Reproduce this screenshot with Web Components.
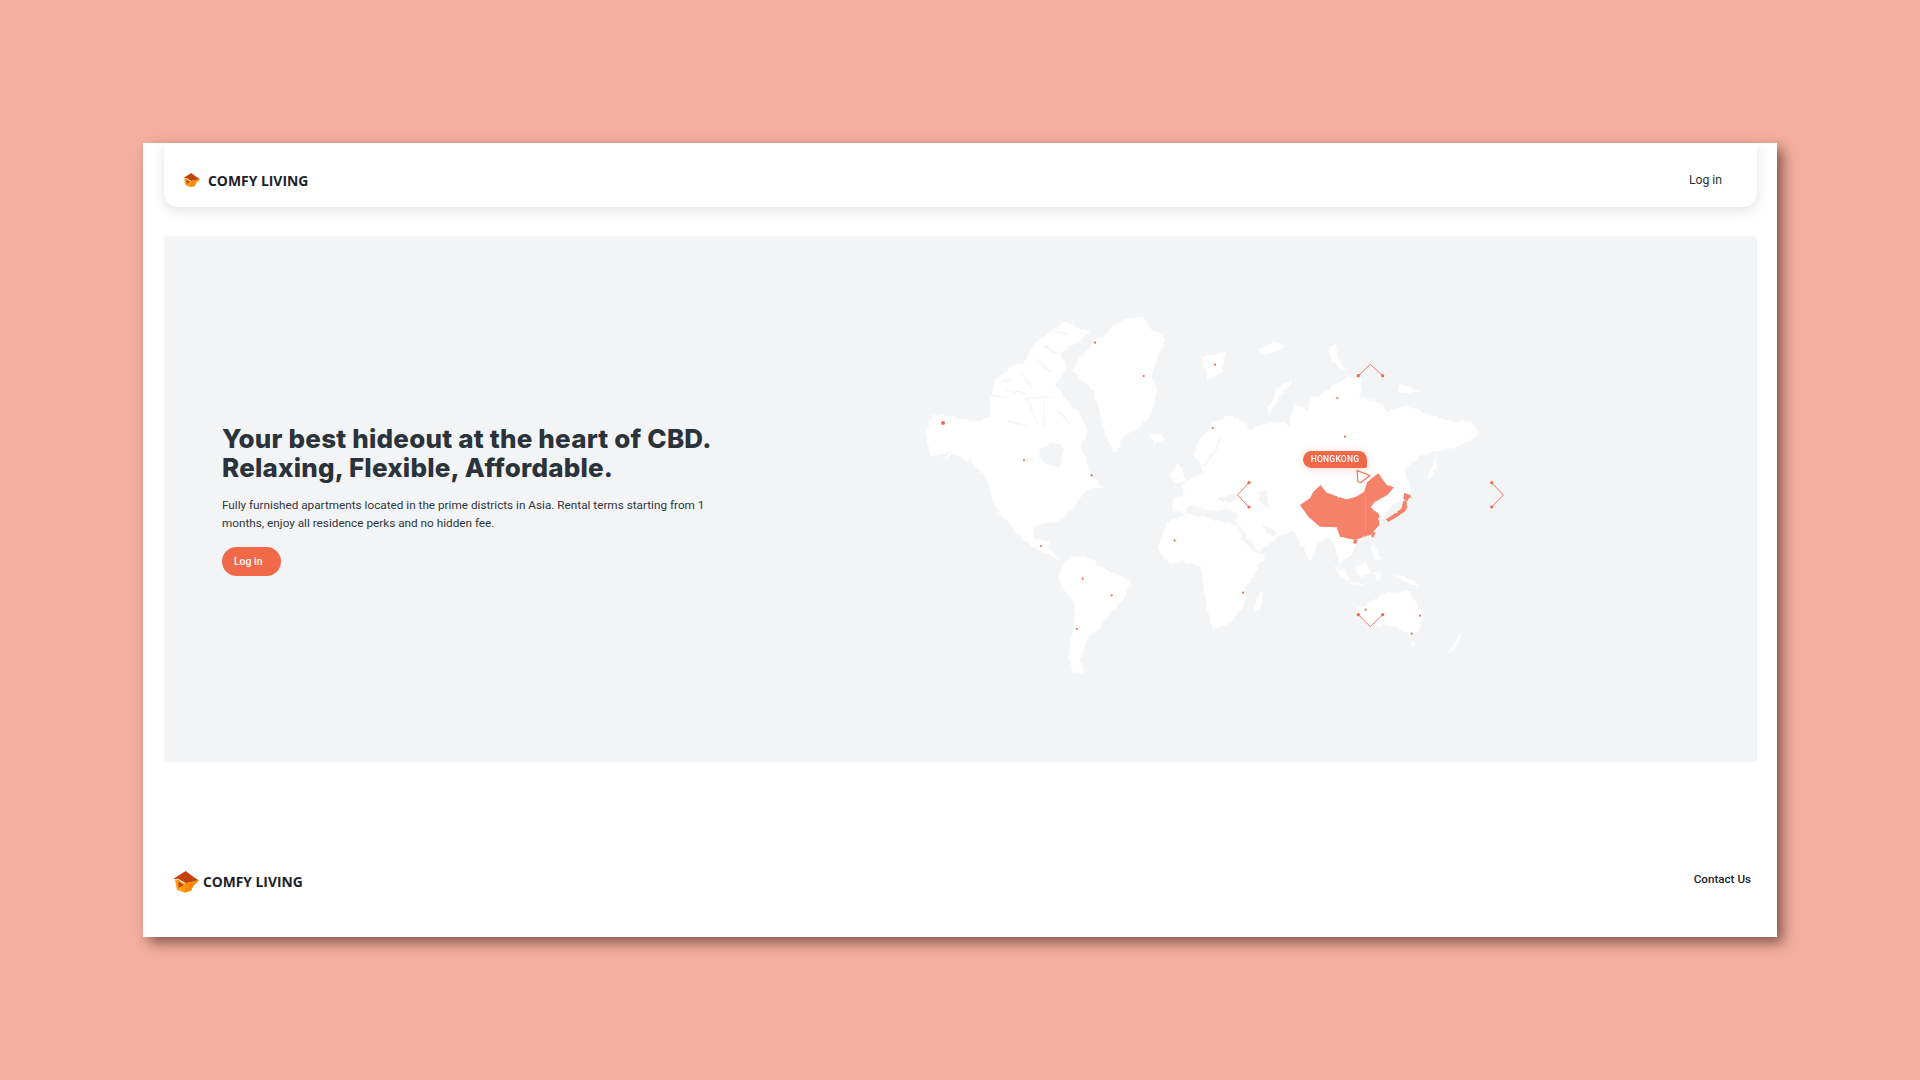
<!DOCTYPE html>
<html lang="en"><head><meta charset="utf-8"><title>Comfy Living</title>
<style>
html,body{margin:0;height:1080px;overflow:hidden}
body{background:#F4AF9F;padding:143px;box-sizing:border-box;font-family:Roboto,"Liberation Sans",sans-serif;color:#2b3138}
</style></head><body>
<app-frame>
  <site-header></site-header>
  <hero-panel></hero-panel>
  <site-footer></site-footer>
</app-frame>
<script>
const def=(name,html)=>customElements.define(name,class extends HTMLElement{
  constructor(){super();this.attachShadow({mode:'open'}).innerHTML=html;}
});
def('app-frame',`<style>:host{display:flex;flex-direction:column;width:1634px;height:794px;background:#fff;box-shadow:6px 6px 12px rgba(70,35,28,.62);padding:0 20px 0 21px;box-sizing:border-box}</style><slot></slot>`);
def('brand-logo',`<style>
:host{display:inline-flex;align-items:center;gap:var(--gap,8px);font:700 var(--fs,13.9px) "Open Sans","Noto Sans",sans-serif;color:#1c2229}
svg{width:var(--iw,17px);height:auto;display:block}
</style><svg viewBox="0 0 80 67"><path d="M39 0 0 25 16 24 40 38 80 29 62 18Z" fill="#C5420F"/><path d="M6 26 16 26 32 38 40 38 80 28 62 46 56 60 36 67 12 58Z" fill="#FF9C14"/><path d="M40 38 80 28 62 46 56 60 36 67Z" fill="#F98A0C"/><path d="M17 32 33 42 17 52Z" fill="#C8400F"/></svg><span>COMFY LIVING</span>`);
def('site-header',`<style>
:host{display:flex;align-items:center;justify-content:space-between;height:64px;padding:10px 35px 0 19px;background:#fff;border-radius:0 0 14px 14px;box-shadow:0 4px 12px rgba(40,50,60,.13);flex:none;box-sizing:border-box}
a{font:400 12.2px Roboto,sans-serif;color:#2b3138}
</style><brand-logo></brand-logo><a>Log in</a>`);
def('pill-button',`<style>
:host{display:inline-flex;align-items:center;width:59px;height:29px;box-sizing:border-box;padding-left:12px;border-radius:15px;background:#F2694A;color:#fff;font:500 10.4px Roboto,sans-serif}
</style><slot></slot>`);
def('hero-panel',`<style>
:host{display:flex;height:526px;margin-top:29px;background:#F2F4F6;border-radius:4px;padding-left:58px;flex:none;align-items:flex-start}
.copy{width:678px;flex:none;margin-top:188px}
h1{margin:0 0 15px;font:800 26px/29px Inter,sans-serif;color:#2a323a;white-space:nowrap;letter-spacing:.2px}
p{margin:0 0 15px;font:400 11.75px/17.6px Roboto,sans-serif;color:#2f353b;width:495px}
world-map{margin-top:64px}
</style><div class="copy"><h1>Your best hideout at the heart of CBD.<br>Relaxing, Flexible, Affordable.</h1><p>Fully furnished apartments located in the prime districts in Asia. Rental terms starting from 1 months, enjoy all residence perks and no hidden fee.</p><pill-button>Log in</pill-button></div><world-map></world-map>`);
def('site-footer',`<style>
:host{display:flex;justify-content:space-between;align-items:flex-start;padding:109px 6px 0 9px;--gap:4px;--fs:13.8px;--iw:26px}
a{font:500 11.65px Roboto,sans-serif;color:#1d2329;margin-top:1px}
</style><brand-logo></brand-logo><a>Contact Us</a>`);
const BG='#F2F4F6',OR='#F2694A';
const pins=[[910,300,[[555,128],[701,228],[342,481],[545,526]]],[910,480,[[393,198],[518,296],[605,346],[500,447],[794,182]]],[1150,300,[[195,194],[562,294],[585,410],[188,384]]],[1150,480,[[279,338],[647,389],[810,407],[785,461]]]];
let pinSvg=`<circle cx="943" cy="423" r="2" fill="${OR}"/>`;
for(const [ox,oy,l] of pins)for(const [x,y] of l)pinSvg+=`<circle cx="${(ox+x/3).toFixed(1)}" cy="${(oy+y/3).toFixed(1)}" r="1.1" fill="${OR}"/>`;
const chev=(a,b,c)=>`<polyline points="${a} ${b} ${c}" fill="none" stroke="${OR}" stroke-width=".9"/><circle cx="${a.split(',')[0]}" cy="${a.split(',')[1]}" r="1.6" fill="${OR}"/><circle cx="${c.split(',')[0]}" cy="${c.split(',')[1]}" r="1.6" fill="${OR}"/>`;
def('world-map',`<style>
:host{display:block;position:relative;width:620px;height:398px;flex:none}
svg{display:block;width:620px;height:398px}
.tip{position:absolute;left:403px;top:151px;width:64px;height:17px;background:#F2694A;color:#fff;border-radius:9px 9px 2px 9px;font:500 8.5px/17px Roboto,sans-serif;letter-spacing:.25px;text-align:center;box-shadow:0 1px 8px rgba(242,105,74,.28)}
</style>
<svg viewBox="900 300 620 398">
<defs>
<filter id="coast" filterUnits="userSpaceOnUse" x="900" y="300" width="620" height="398"><feTurbulence type="fractalNoise" baseFrequency=".16" numOctaves="3" seed="4"/><feDisplacementMap in="SourceGraphic" scale="5" xChannelSelector="R" yChannelSelector="G"/><feGaussianBlur stdDeviation=".35"/></filter>
<filter id="cn" filterUnits="userSpaceOnUse" x="1280" y="430" width="160" height="130"><feTurbulence type="fractalNoise" baseFrequency=".35" numOctaves="2" seed="7"/><feDisplacementMap in="SourceGraphic" scale="2" xChannelSelector="R" yChannelSelector="G"/><feGaussianBlur stdDeviation=".2"/></filter>
</defs>
<g filter="url(#coast)">
<g fill="#fff">
 <g transform="translate(910 300) scale(.3333)">
  <path d="M490 210 505 180 520 160 555 125 590 100 620 70 650 55 700 52 715 75 730 90 768 115 755 145 742 170 725 230 742 270 722 340 690 380 640 410 620 462 600 440 585 400 570 340 550 270 510 240Z"/>
  <path d="M45 395 70 345 100 342 130 350 190 365 240 352 240 290 255 240 300 200 340 190 375 130 400 110 465 65 540 95 500 130 450 155 470 210 435 255 470 300 510 340 535 400 510 440 525 465 540 520 578 565 530 570 492 620 470 640 445 670 420 665 370 680 375 715 400 725 420 722 415 745 440 770 452 775 435 775 395 755 340 722 305 680 270 640 245 600 230 540 190 492 130 460 85 490 125 455 60 470Z"/>
  <path d="M715 405 755 400 760 420 735 432Z"/><path d="M570 345 585 345 582 360 572 358Z"/>
 </g>
 <path transform="translate(910 480) scale(.3333)" d="M445 290 465 245 500 225 550 240 590 270 625 285 662 300 655 330 630 370 600 400 570 440 530 475 510 540 520 580 490 580 475 530 490 440 495 370 455 320Z"/>
 <g transform="translate(1150 300) scale(.3333)">
  <path d="M65 632 68 595 105 585 95 560 130 530 175 515 205 510 215 460 250 420 300 390 340 372 400 365 420 382 432 310 470 330 480 300 530 270 600 225 635 240 630 290 700 310 710 340 770 315 850 350 890 360 960 365 990 400 960 420 920 440 870 450 810 470 760 510 785 570 760 600 730 610 700 650 668 650 640 712 620 730 600 770 570 790 600 840 585 840 555 750 540 710 510 720 480 780 450 730 430 695 385 710 325 755 265 675 240 640 180 645 130 625 105 640Z"/>
  <path d="M130 470 145 420 190 370 240 345 295 372 295 400 260 425 225 470 215 515 160 515 150 485Z"/>
  <path d="M155 170 230 155 215 215 175 240Z"/><path d="M350 335 380 270 425 238 425 250 385 292 365 340Z"/><path d="M320 150 370 125 410 140 350 165Z"/><path d="M535 140 555 130 570 190 595 210 575 215 545 180Z"/><path d="M745 255 780 260 810 275 750 280Z"/>
  <path d="M0 405 40 400 30 430 10 430Z"/><path d="M62 530 85 485 105 525 110 545 70 550Z"/><path d="M835 530 865 450 858 505 838 540Z"/>
 </g>
 <g transform="translate(1150 480) scale(.3333)">
  <path d="M28 190 50 130 110 100 200 120 262 135 290 190 310 215 345 225 310 290 280 330 285 375 260 400 245 430 190 445 175 400 165 340 150 260 100 245 60 250 30 220Z"/>
  <path d="M325 340 340 335 330 390 310 395Z"/>
  <path d="M555 255 600 298 592 305 560 275Z"/><path d="M615 262 650 245 660 280 630 292Z"/><path d="M600 305 660 318 600 312Z"/><path d="M672 280 690 272 695 300 680 305Z"/><path d="M720 280 790 300 805 322 745 298Z"/><path d="M670 190 690 240 680 242 665 210Z"/>
  <path d="M625 385 670 360 710 335 745 340 770 330 800 370 820 410 810 450 780 470 755 445 720 435 660 440 635 420Z"/><path d="M782 485 798 485 790 500Z"/><path d="M925 460 935 460 915 510 890 518 920 480Z"/>
 </g>
</g>
<g fill="${BG}" stroke="none" transform="translate(1150 300) scale(.3333)">
 <path d="M105 625 130 615 180 630 240 628 262 638 262 660 205 662 160 650 130 650Z" opacity=".9"/><path d="M205 590 250 582 270 598 235 610 205 602Z"/><path d="M325 575 350 570 358 625 335 610Z"/><path d="M215 410 190 460 160 500" fill="none" stroke="${BG}" stroke-width="5"/><path d="M335 672 345 675 385 700 372 712 345 690Z"/>
 <path d="M265 678 300 735 320 755 310 755 275 715Z" opacity=".8"/><path d="M625 660 660 640 640 672Z"/>
</g>
<g transform="translate(910 300) scale(.3333)" fill="none" stroke="${BG}" stroke-width="4" stroke-linecap="round">
 <path d="M385 450 420 425 460 440 450 500 400 490Z" fill="${BG}" stroke="none"/>
 <path d="M240 285 290 292"/><path d="M345 297 425 290"/><path d="M290 272 345 280"/><path d="M330 222 365 258"/><path d="M402 300V385"/><path d="M440 160 400 135"/><path d="M355 300 380 370"/><path d="M380 180 420 215"/><path d="M300 365 350 378"/><path d="M440 330 480 370"/><path d="M270 250 300 235"/><path d="M430 90 470 105"/>
</g>
</g>
<g filter="url(#cn)"><g transform="translate(1280 430) scale(.3333)" fill="#F58267">
 <path d="M60 225 90 205 100 185 122 165 140 188 175 200 200 208 228 200 252 185 262 155 295 130 320 165 342 172 322 195 285 215 272 232 297 252 298 285 272 314 225 330 180 320 170 292 120 290 85 260Z"/>
 <path d="M222 330 234 330 228 342 218 338Z"/><path d="M278 305 287 308 279 324 273 318Z"/>
 <path d="M318 268 345 250 364 236 370 213 380 212 380 240 350 262 324 276Z"/><path d="M373 188 394 198 380 214 370 206Z"/>
</g></g>
<path d="M1365.5 492V530" stroke="#F99A84" stroke-width=".8" opacity=".7"/>
${pinSvg}
${chev('1358.3,375.7','1370.3,364.3','1382.7,375.7')}
${chev('1358.3,614.7','1370.3,626.7','1382.7,614.7')}
${chev('1249,482.7','1237.3,495','1249,507')}
${chev('1491.7,482.7','1503.3,495','1491.7,507')}
<path d="M1357 470.5 1370 475.5 1361 482.5 1358 482Z" fill="#fff" stroke="${OR}" stroke-width="1.1" stroke-linejoin="round"/>
</svg><div class="tip">HONGKONG</div>`);
</script></body></html>
